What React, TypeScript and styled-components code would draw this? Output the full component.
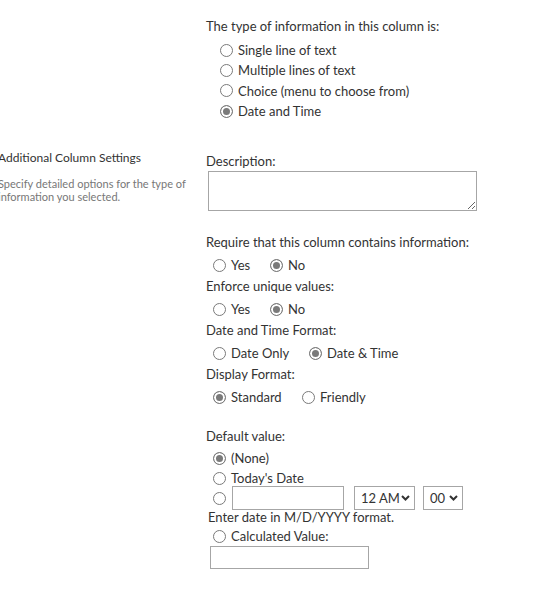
import React from "react";
import styled, { createGlobalStyle } from "styled-components";

const GlobalStyle = createGlobalStyle`
  body {
    margin: 0;
    background: #fff;
    font-family: Lato, "Noto Sans", sans-serif;
    color: #333;
    overflow: hidden;
  }
`;

const Page = styled.div`
  width: 537px;
  height: 593px;
  padding-top: 16px;
  box-sizing: border-box;
`;

const Section = styled.div<{ $mt?: number }>`
  display: grid;
  grid-template-columns: 208px 1fr;
  margin-left: -2px;
  margin-top: ${(p) => p.$mt ?? 0}px;
`;

const SideCell = styled.div``;

const SideTitle = styled.div`
  font-size: 12px;
  line-height: 17px;
  color: #333;
`;

const SideText = styled.div`
  margin-top: 11px;
  font-size: 11px;
  line-height: 13px;
  color: #777;
  width: 196px;
`;

const Body = styled.div`
  display: flex;
  flex-direction: column;
`;

const Label = styled.div<{ $mt?: number }>`
  font-size: 13px;
  line-height: 20px;
  margin-top: ${(p) => p.$mt ?? 0}px;
  color: #333;
`;

const List = styled.div<{ $indent?: number; $mt?: number; $h?: number }>`
  display: flex;
  flex-direction: column;
  padding-left: ${(p) => p.$indent ?? 7}px;
  margin-top: ${(p) => p.$mt ?? 0}px;

  & > label {
    height: ${(p) => p.$h ?? 20}px;
  }
`;

const Row = styled.label`
  display: flex;
  align-items: center;
  font-size: 13px;
  color: #333;
  white-space: nowrap;
`;

const InlineRow = styled.div`
  display: flex;
  align-items: center;
  height: 22px;
  padding-left: 7px;
  margin-top: 2px;
`;

const Option = styled.label<{ $w: number }>`
  display: flex;
  align-items: center;
  width: ${(p) => p.$w}px;
  font-size: 13px;
  color: #333;
  white-space: nowrap;
`;

const Radio = styled.input.attrs({ type: "radio", readOnly: true })`
  appearance: none;
  -webkit-appearance: none;
  box-sizing: border-box;
  width: 13px;
  height: 13px;
  margin: 0 5px 0 0;
  border: 1px solid #7a7a7a;
  border-radius: 50%;
  background: #fff;
  flex: none;

  &:checked {
    background: #7a7a7a;
    box-shadow: inset 0 0 0 2px #fff;
  }
`;

const TextArea = styled.textarea`
  box-sizing: border-box;
  width: 269px;
  height: 40px;
  margin: 0 0 0 2px;
  border: 1px solid #a6a6a6;
  font-family: inherit;
  font-size: 13px;
  resize: both;
  display: block;
`;

const TextBox = styled.input<{ $w: number }>`
  box-sizing: border-box;
  width: ${(p) => p.$w}px;
  height: 24px;
  margin-left: 1px;
  border: 1px solid #a6a6a6;
  font-family: inherit;
  font-size: 13px;
  padding: 0 4px;
`;

const DateRow = styled.div`
  display: flex;
  align-items: center;
  height: 24px;
`;

const SelectBox = styled.div<{ $w: number; $ml: number }>`
  box-sizing: border-box;
  width: ${(p) => p.$w}px;
  height: 24px;
  margin-left: ${(p) => p.$ml}px;
  border: 1px solid #a6a6a6;
  display: flex;
  align-items: center;
  justify-content: space-between;
  padding: 0 4px 0 6px;
  font-size: 13px;
  color: #333;
`;

const Hint = styled.div`
  font-size: 13px;
  line-height: 17px;
  margin: 1px 0 0 2px;
  color: #333;
`;

const CalcBox = styled.input`
  box-sizing: border-box;
  width: 159px;
  height: 23px;
  margin: 0 0 0 4px;
  border: 1px solid #a6a6a6;
`;

const Chevron = () => (
  <svg width="9" height="6" viewBox="0 0 9 6">
    <path d="M1 1l3.5 3.5L8 1" fill="none" stroke="#333" strokeWidth="2" />
  </svg>
);

export default function App() {
  return (
    <Page>
      <GlobalStyle />
      <Section>
        <div />
        <Body>
          <Label>The type of information in this column is:</Label>
          <List $indent={14} $mt={4} $h={20.3}>
            <Row><Radio name="t" />Single line of text</Row>
            <Row><Radio name="t" />Multiple lines of text</Row>
            <Row><Radio name="t" />Choice (menu to choose from)</Row>
            <Row><Radio name="t" defaultChecked />Date and Time</Row>
          </List>
        </Body>
      </Section>

      <Section $mt={28}>
        <SideCell>
          <SideTitle>Additional Column Settings</SideTitle>
          <SideText>Specify detailed options for the type of information you selected.</SideText>
        </SideCell>
        <Body>
          <Label $mt={2}>Description:</Label>
          <TextArea />
          <Label $mt={21}>Require that this column contains information:</Label>
          <InlineRow>
            <Option $w={57}><Radio name="r" />Yes</Option>
            <Option $w={50}><Radio name="r" defaultChecked />No</Option>
          </InlineRow>
          <Label>Enforce unique values:</Label>
          <InlineRow>
            <Option $w={57}><Radio name="u" />Yes</Option>
            <Option $w={50}><Radio name="u" defaultChecked />No</Option>
          </InlineRow>
          <Label>Date and Time Format:</Label>
          <InlineRow>
            <Option $w={96}><Radio name="f" />Date Only</Option>
            <Option $w={100}><Radio name="f" defaultChecked />Date &amp; Time</Option>
          </InlineRow>
          <Label>Display Format:</Label>
          <InlineRow>
            <Option $w={89}><Radio name="d" defaultChecked />Standard</Option>
            <Option $w={80}><Radio name="d" />Friendly</Option>
          </InlineRow>

          <Label $mt={18}>Default value:</Label>
          <List $mt={2}>
            <Row><Radio name="v" defaultChecked />(None)</Row>
            <Row><Radio name="v" />Today's Date</Row>
          </List>
          <List $h={20}>
            <Row>
              <Radio name="v" />
              <DateRow>
                <TextBox $w={112} />
                <SelectBox $w={61} $ml={10}>12 AM<Chevron /></SelectBox>
                <SelectBox $w={40} $ml={8}>00<Chevron /></SelectBox>
              </DateRow>
            </Row>
          </List>
          <Hint>Enter date in M/D/YYYY format.</Hint>
          <List>
            <Row><Radio name="v" />Calculated Value:</Row>
          </List>
          <CalcBox />
        </Body>
      </Section>
    </Page>
  );
}
